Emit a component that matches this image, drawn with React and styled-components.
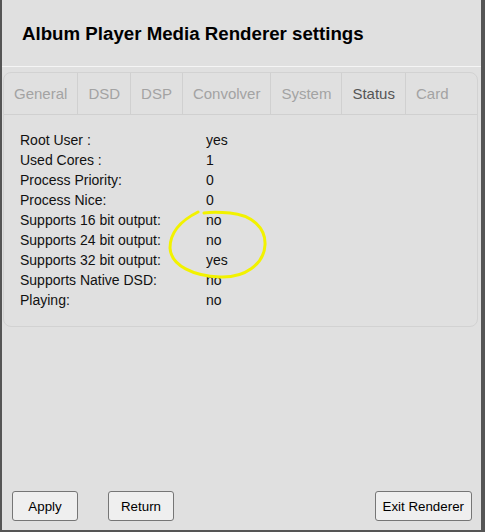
import styled, { createGlobalStyle } from "styled-components";

const Global = createGlobalStyle`
  html, body {
    margin: 0;
    padding: 0;
    background: #e0e0e0;
  }
  body {
    font-family: "Liberation Sans", Arial, sans-serif;
  }
`;

// Fenêtre principale
const Window = styled.div`
  width: 485px;
  height: 532px;
  box-sizing: border-box;
  border-left: 2px solid #555555;
  border-right: 4px solid #555555;
  border-bottom: 2px solid #555555;
  background: #e0e0e0;
  display: flex;
  flex-direction: column;
`;

const Header = styled.div`
  height: 67px;
  display: flex;
  align-items: center;
  padding: 1px 0 0 20px;
  border-bottom: 1px solid #f5f5f5;
  box-sizing: border-box;
`;

const Title = styled.h1`
  margin: 0;
  font-size: 18.7px;
  font-weight: bold;
  color: #000;
`;

const Panel = styled.div`
  margin: 5px 3px 0 1px;
  border: 1px solid #d2d2d2;
  border-radius: 8px;
  position: relative;
`;

const Tabs = styled.div`
  display: flex;
  height: 41px;
  border-bottom: 1px solid #d0d0d0;
`;

const Tab = styled.div`
  padding: 0 10px;
  display: flex;
  align-items: center;
  font-size: 15px;
  color: ${(p) => (p.$active ? "#555555" : "#a3a3a3")};
  border-right: ${(p) => (p.$last ? "none" : "1px solid #d0d0d0")};
`;

const Rows = styled.div`
  padding: 15px 16px 16px;
`;

const Row = styled.div`
  display: grid;
  grid-template-columns: 186px 1fr;
  height: 20px;
  align-items: center;
  font-size: 14px;
  color: #111;
`;

// annotation jaune dessinée à la main
const Circle = styled.svg`
  position: absolute;
  left: 156px;
  top: 127px;
  pointer-events: none;
`;

const Spacer = styled.div`
  flex: 1;
`;

const Footer = styled.div`
  display: flex;
  align-items: center;
  padding: 0 9px 9px 10px;
`;

const Button = styled.button`
  height: 30px;
  min-width: 66px;
  padding: 0 7px;
  margin-right: ${(p) => p.$gap || 0}px;
  background: #efefef;
  border: 1px solid #767676;
  border-radius: 3px;
  font-family: "Liberation Sans", Arial, sans-serif;
  font-size: 13.33px;
  color: #000;
`;

const tabs = ["General", "DSD", "DSP", "Convolver", "System", "Status", "Card"];

const status = [
  ["Root User :", "yes"],
  ["Used Cores :", "1"],
  ["Process Priority:", "0"],
  ["Process Nice:", "0"],
  ["Supports 16 bit output:", "no"],
  ["Supports 24 bit output:", "no"],
  ["Supports 32 bit output:", "yes"],
  ["Supports Native DSD:", "no"],
  ["Playing:", "no"],
];

export default function App() {
  return (
    <>
      <Global />
      <Window>
        <Header>
          <Title>Album Player Media Renderer settings</Title>
        </Header>
        <Panel>
          <Tabs>
            {tabs.map((t, i) => (
              <Tab key={t} $active={t === "Status"} $last={i === tabs.length - 1}>
                {t}
              </Tab>
            ))}
          </Tabs>
          <Rows>
            {status.map(([label, value]) => (
              <Row key={label}>
                <span>{label}</span>
                <span>{value}</span>
              </Row>
            ))}
          </Rows>
          <Circle width="120" height="90" viewBox="0 0 120 90">
            <path
              d="M38 12 C22 20 10 32 10 48 C11 66 34 76 60 77 C85 78 104 64 105 45 C106 28 92 15 70 13 C60 12 50 12 44 13"
              fill="none"
              stroke="#f2f200"
              strokeWidth="3"
              strokeLinecap="round"
            />
          </Circle>
        </Panel>
        <Spacer />
        <Footer>
          <Button $gap={30}>Apply</Button>
          <Button>Return</Button>
          <Spacer />
          <Button>Exit Renderer</Button>
        </Footer>
      </Window>
    </>
  );
}
